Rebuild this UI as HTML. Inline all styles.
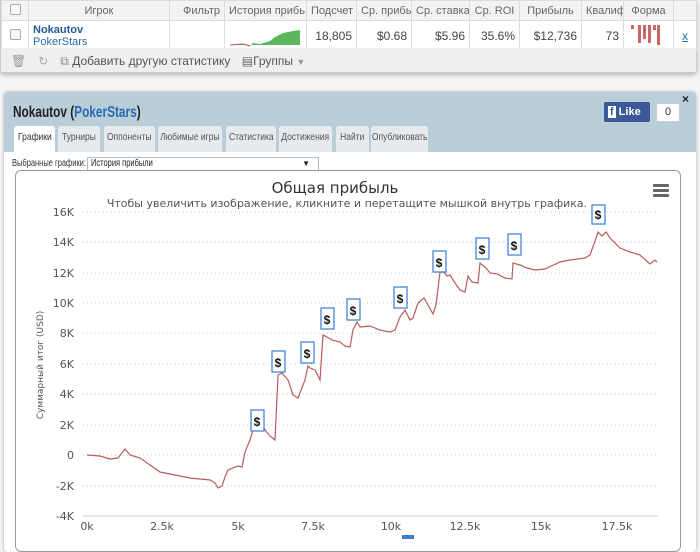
<!DOCTYPE html>
<html><head><meta charset="utf-8"><style>
body{margin:0;width:700px;height:539px;overflow:hidden;background:#f4f4f4;font-family:"Liberation Sans","DejaVu Sans",sans-serif;position:relative}
.top{position:absolute;left:0;top:0;width:695px;height:72px;background:#fff;border:1px solid #ccc;border-top:none;border-radius:0 0 4px 4px;box-shadow:0 2px 4px rgba(0,0,0,.25)}
table{border-collapse:collapse;font-size:11px;color:#444}
td{border:1px solid #ddd;padding:0 4px;white-space:nowrap;overflow:hidden}
.hd td{height:19px;background:#f3f3f3;color:#666;text-align:center}
.rw td{height:27px;text-align:right;font-size:12px}
.cb{display:inline-block;width:9px;height:9px;border:1px solid #aaa;border-radius:2px;background:#f8f8f8}
.tb{position:absolute;left:0;top:48px;width:695px;height:24px;background:#efefef;font-size:12px;color:#555;line-height:26px}
.panel{position:absolute;left:4px;top:92px;width:692px;height:460px;background:#fff;border-radius:4px;box-shadow:0 0 3px rgba(0,0,0,.3)}
.ph{height:60px;background:#b9ced8;border-radius:4px 4px 0 0;position:relative}
.title{position:absolute;left:9px;top:12px;font-size:16px;font-weight:bold;color:#222;transform:scaleX(0.74);transform-origin:0 0;white-space:nowrap}
.title span{color:#2a6ab0}
.tabs{position:absolute;left:10px;top:34px;font-size:10px;color:#555;white-space:nowrap}
.tab{position:absolute;top:0;height:26px;line-height:24px;background:#e6eaec;border-radius:3px 3px 0 0;text-align:center;overflow:hidden}
.tab span{display:inline-block;transform:scaleX(.85);margin:0 -10px}
.tab.a{background:#fff;color:#333}
.n{display:inline-block;transform:scaleX(.75);transform-origin:0 0;white-space:nowrap}
</style></head><body>
<div class="top">
<table style="position:absolute;left:0;top:0;width:695px;table-layout:fixed">
<colgroup><col style="width:27px"><col style="width:141px"><col style="width:55px"><col style="width:82px"><col style="width:50px"><col style="width:55px"><col style="width:58px"><col style="width:50px"><col style="width:62px"><col style="width:42px"><col style="width:50px"><col style="width:23px"></colgroup>
<tr class="hd"><td><span class="cb"></span></td><td>Игрок</td><td style="text-align:right">Фильтр</td><td>История прибь</td><td>Подсчет</td><td>Ср. прибь</td><td>Ср. ставка</td><td>Ср. ROI</td><td>Прибыль</td><td>Квалиф</td><td>Форма</td><td></td></tr>
<tr class="rw"><td style="text-align:center"><span class="cb"></span></td><td style="text-align:left;line-height:12px;font-size:11px"><b style="color:#2a5a9a">Nokautov</b><br><span style="color:#2a6ab0">PokerStars</span></td><td></td><td style="padding:0"><svg width="82" height="27"><path d="M5 24 L20 23 L25 25 L28 22 L35 23 L45 20 L50 16 L58 12 L68 10 L75 9 L75 24 L20 24Z" fill="#5cb85c"/><path d="M5 24 L18 23 L25 25" stroke="#b55" fill="none"/></svg></td><td>18,805</td><td>$0.68</td><td>$5.96</td><td>35.6%</td><td>$12,736</td><td>73</td><td style="padding:0"><svg width="50" height="27"><g fill="#c66"><rect x="7" y="4" width="3" height="4"/><rect x="14" y="4" width="3" height="18"/><rect x="19" y="4" width="3" height="14"/><rect x="24" y="4" width="3" height="18"/><rect x="29" y="4" width="3" height="5"/><rect x="33" y="4" width="3" height="20"/></g></svg></td><td style="text-align:center;color:#2a6ab0;text-decoration:underline">x</td></tr>
</table>
<div class="tb"><span style="margin-left:10px;color:#999">🗑</span><span style="margin-left:12px;color:#aaa">↻</span><span style="margin-left:12px;color:#888">⧉</span> Добавить другую статистику <span style="margin-left:8px;color:#666">▤</span>Группы <span style="color:#999;font-size:9px">▼</span></div>
</div>
<div class="panel">
<div class="ph">
<div class="title">Nokautov (<span>PokerStars</span>)</div>
<div style="position:absolute;left:600px;top:10px;width:46px;height:20px;background:#3b5998;color:#fff;font-size:11px;font-weight:bold;line-height:20px;border-radius:2px"><span style="background:#fff;color:#3b5998;padding:0 2px;margin:0 3px 0 4px">f</span>Like</div>
<div style="position:absolute;left:652px;top:11px;width:22px;height:17px;background:#fff;border:1px solid #ccc;font-size:11px;text-align:center;line-height:17px;color:#333">0</div>
<div style="position:absolute;left:678px;top:0;font-size:12px;font-weight:bold;color:#222">×</div>
<div class="tabs">
<div class="tab a" style="left:0;width:41px"><span>Графики</span></div>
<div class="tab" style="left:44px;width:42px"><span>Турниры</span></div>
<div class="tab" style="left:90px;width:51px"><span>Оппоненты</span></div>
<div class="tab" style="left:144px;width:64px"><span>Любимые игры</span></div>
<div class="tab" style="left:212px;width:50px"><span>Статистика</span></div>
<div class="tab" style="left:265px;width:53px"><span>Достижения</span></div>
<div class="tab" style="left:322px;width:33px"><span>Найти</span></div>
<div class="tab" style="left:357px;width:57px"><span>Опубликовать</span></div>
</div></div>
<div style="position:absolute;left:8px;top:66px;font-size:10px;color:#333" class="n">Выбранные графики:</div>
<div style="position:absolute;left:83px;top:65px;width:227px;height:12px;border:1px solid #bbb;font-size:10px;line-height:12px;padding-left:3px;color:#222"><span class="n">История прибыли</span><span style="position:absolute;right:8px;top:0;font-size:8px">▼</span></div>
</div>
<div style="position:absolute;left:15px;top:170px;width:664px;height:380px;border:1px solid #999;border-radius:6px;background:#fff"></div>
<svg style="position:absolute;left:0;top:0" width="700" height="539">
<text x="335" y="193" text-anchor="middle" font-size="15" fill="#333" font-family="DejaVu Sans">Общая прибыль</text>
<text x="347" y="207" text-anchor="middle" font-size="11" fill="#555" font-family="DejaVu Sans">Чтобы увеличить изображение, кликните и перетащите мышкой внутрь графика.</text>
<g fill="#666"><rect x="653" y="184" width="16" height="3" rx="1"/><rect x="653" y="189" width="16" height="3" rx="1"/><rect x="653" y="194" width="16" height="3" rx="1"/></g>
<g stroke="#ccc" stroke-dasharray="1,3"><line x1="83" x2="658" y1="212" y2="212"/><line x1="83" x2="658" y1="242" y2="242"/><line x1="83" x2="658" y1="273" y2="273"/><line x1="83" x2="658" y1="303" y2="303"/><line x1="83" x2="658" y1="333" y2="333"/><line x1="83" x2="658" y1="364" y2="364"/><line x1="83" x2="658" y1="394" y2="394"/><line x1="83" x2="658" y1="425" y2="425"/><line x1="83" x2="658" y1="455" y2="455"/><line x1="83" x2="658" y1="486" y2="486"/></g>
<line x1="83" x2="658" y1="516" y2="516" stroke="#ccd"/>
<g font-size="11" fill="#555" text-anchor="end" font-family="DejaVu Sans"><text x="74" y="216">16K</text><text x="74" y="246">14K</text><text x="74" y="277">12K</text><text x="74" y="307">10K</text><text x="74" y="337">8K</text><text x="74" y="368">6K</text><text x="74" y="398">4K</text><text x="74" y="429">2K</text><text x="74" y="459">0</text><text x="74" y="490">-2K</text><text x="74" y="520">-4K</text></g>
<g font-size="11" fill="#555" text-anchor="middle" font-family="DejaVu Sans"><text x="87" y="530">0k</text><text x="162" y="530">2.5k</text><text x="238" y="530">5k</text><text x="313" y="530">7.5k</text><text x="391" y="530">10k</text><text x="465" y="530">12.5k</text><text x="541" y="530">15k</text><text x="617" y="530">17.5k</text></g>
<text transform="translate(43,365) rotate(-90)" text-anchor="middle" font-size="9" fill="#555" font-family="DejaVu Sans">Суммарный итог (USD)</text>
<polyline fill="none" stroke="#b85c5c" stroke-width="1.2" points="87,455 100,456 110,459 118,458 122,453 125,449 130,455 140,458 150,465 160,472 170,474 175,475 190,478 200,479 210,480 215,483 218,488 222,486 225,477 228,470 233,468 238,466 242,467 245,452 250,440 253,430 255,430 258,418 260,420 265,430 270,436 275,440 278,375 282,373 288,380 293,395 298,398 303,385 305,380 308,366 310,368 315,370 320,380 323,335 327,337 332,340 340,342 345,346 350,347 353,330 357,322 360,327 370,326 380,330 390,332 395,330 400,317 405,310 410,320 413,318 418,303 424,298 428,305 433,314 436,305 440,272 444,272 447,276 450,275 455,283 460,290 465,292 468,276 472,282 478,283 480,263 486,268 490,273 497,274 505,278 512,279 513,263 520,265 527,268 535,270 545,269 560,262 570,260 585,258 590,255 594,244 598,232 602,236 606,232 610,238 620,248 630,252 640,255 650,264 655,260 657,262"/>
<g stroke="#3a7dd0" fill="#fff" stroke-width="1.2">
<rect x="251" y="410" width="13" height="21"/><rect x="272" y="351" width="13" height="21"/><rect x="301" y="342" width="13" height="21"/><rect x="321" y="308" width="13" height="21"/><rect x="347" y="299" width="13" height="21"/><rect x="394" y="287" width="13" height="21"/><rect x="433" y="251" width="13" height="21"/><rect x="476" y="238" width="13" height="21"/><rect x="508" y="234" width="13" height="21"/><rect x="592" y="205" width="13" height="19"/></g>
<g font-size="12" font-weight="bold" fill="#111" text-anchor="middle"><text x="257" y="426">$</text><text x="278" y="367">$</text><text x="307" y="358">$</text><text x="327" y="324">$</text><text x="353" y="315">$</text><text x="400" y="303">$</text><text x="439" y="267">$</text><text x="482" y="254">$</text><text x="514" y="250">$</text><text x="598" y="219">$</text></g>
<rect x="402" y="535" width="12" height="6" fill="#3a7dd0"/>
</svg>
</body></html>
